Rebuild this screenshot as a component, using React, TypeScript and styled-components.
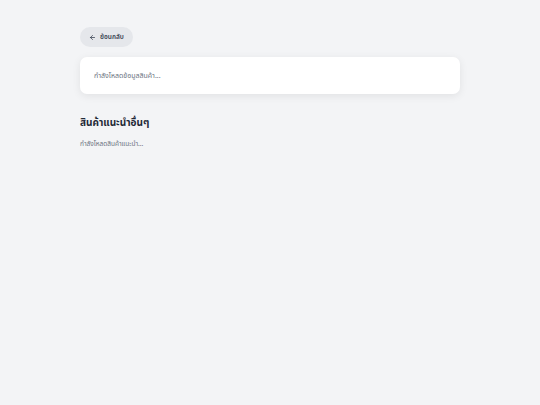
import styled, { createGlobalStyle } from 'styled-components';

const GlobalStyle = createGlobalStyle`
  html, body {
    margin: 0;
    padding: 0;
    background: #f3f4f6;
    font-family: 'Noto Sans', 'Noto Sans Thai', sans-serif;
  }
`;

const Page = styled.main`
  min-height: 405px;
  background: #f3f4f6;
  padding: 27px 80px 0;
  box-sizing: border-box;
  display: flex;
  flex-direction: column;
  align-items: flex-start;
`;

const BackButton = styled.button`
  display: flex;
  align-items: center;
  gap: 4px;
  height: 20px;
  padding: 0 9px;
  border: none;
  border-radius: 10px;
  background: #e5e7eb;
  color: #374151;
  font-family: inherit;
  font-size: 6.5px;
  font-weight: 600;
  cursor: pointer;
`;

const Card = styled.section`
  align-self: stretch;
  margin-top: 10px;
  background: #fff;
  border-radius: 7px;
  box-shadow: 0 2px 8px rgba(0, 0, 0, 0.08);
  padding: 0 14px;
  height: 37px;
  display: flex;
  align-items: center;
`;

const Muted = styled.p<{ $size?: number }>`
  margin: 0;
  color: #6b7280;
  font-size: ${({ $size }) => $size ?? 7}px;
`;

const Heading = styled.h2`
  margin: 20px 0 0;
  color: #1f2937;
  font-size: 10px;
  font-weight: 700;
  line-height: 16px;
`;

const Recommended = styled.div`
  margin-top: 9px;
`;

const ArrowLeft = () => (
  <svg width="7" height="7" viewBox="0 0 24 24" fill="none" stroke="currentColor" strokeWidth="2.6" strokeLinecap="round" strokeLinejoin="round">
    <path d="M19 12H5" />
    <path d="M12 19l-7-7 7-7" />
  </svg>
);

export default function App() {
  return (
    <>
      <GlobalStyle />
      <Page>
        <BackButton>
          <ArrowLeft />
          ย้อนกลับ
        </BackButton>
        <Card>
          <Muted>กำลังโหลดข้อมูลสินค้า...</Muted>
        </Card>
        <Heading>สินค้าแนะนำอื่นๆ</Heading>
        <Recommended>
          <Muted $size={6.5}>กำลังโหลดสินค้าแนะนำ...</Muted>
        </Recommended>
      </Page>
    </>
  );
}
